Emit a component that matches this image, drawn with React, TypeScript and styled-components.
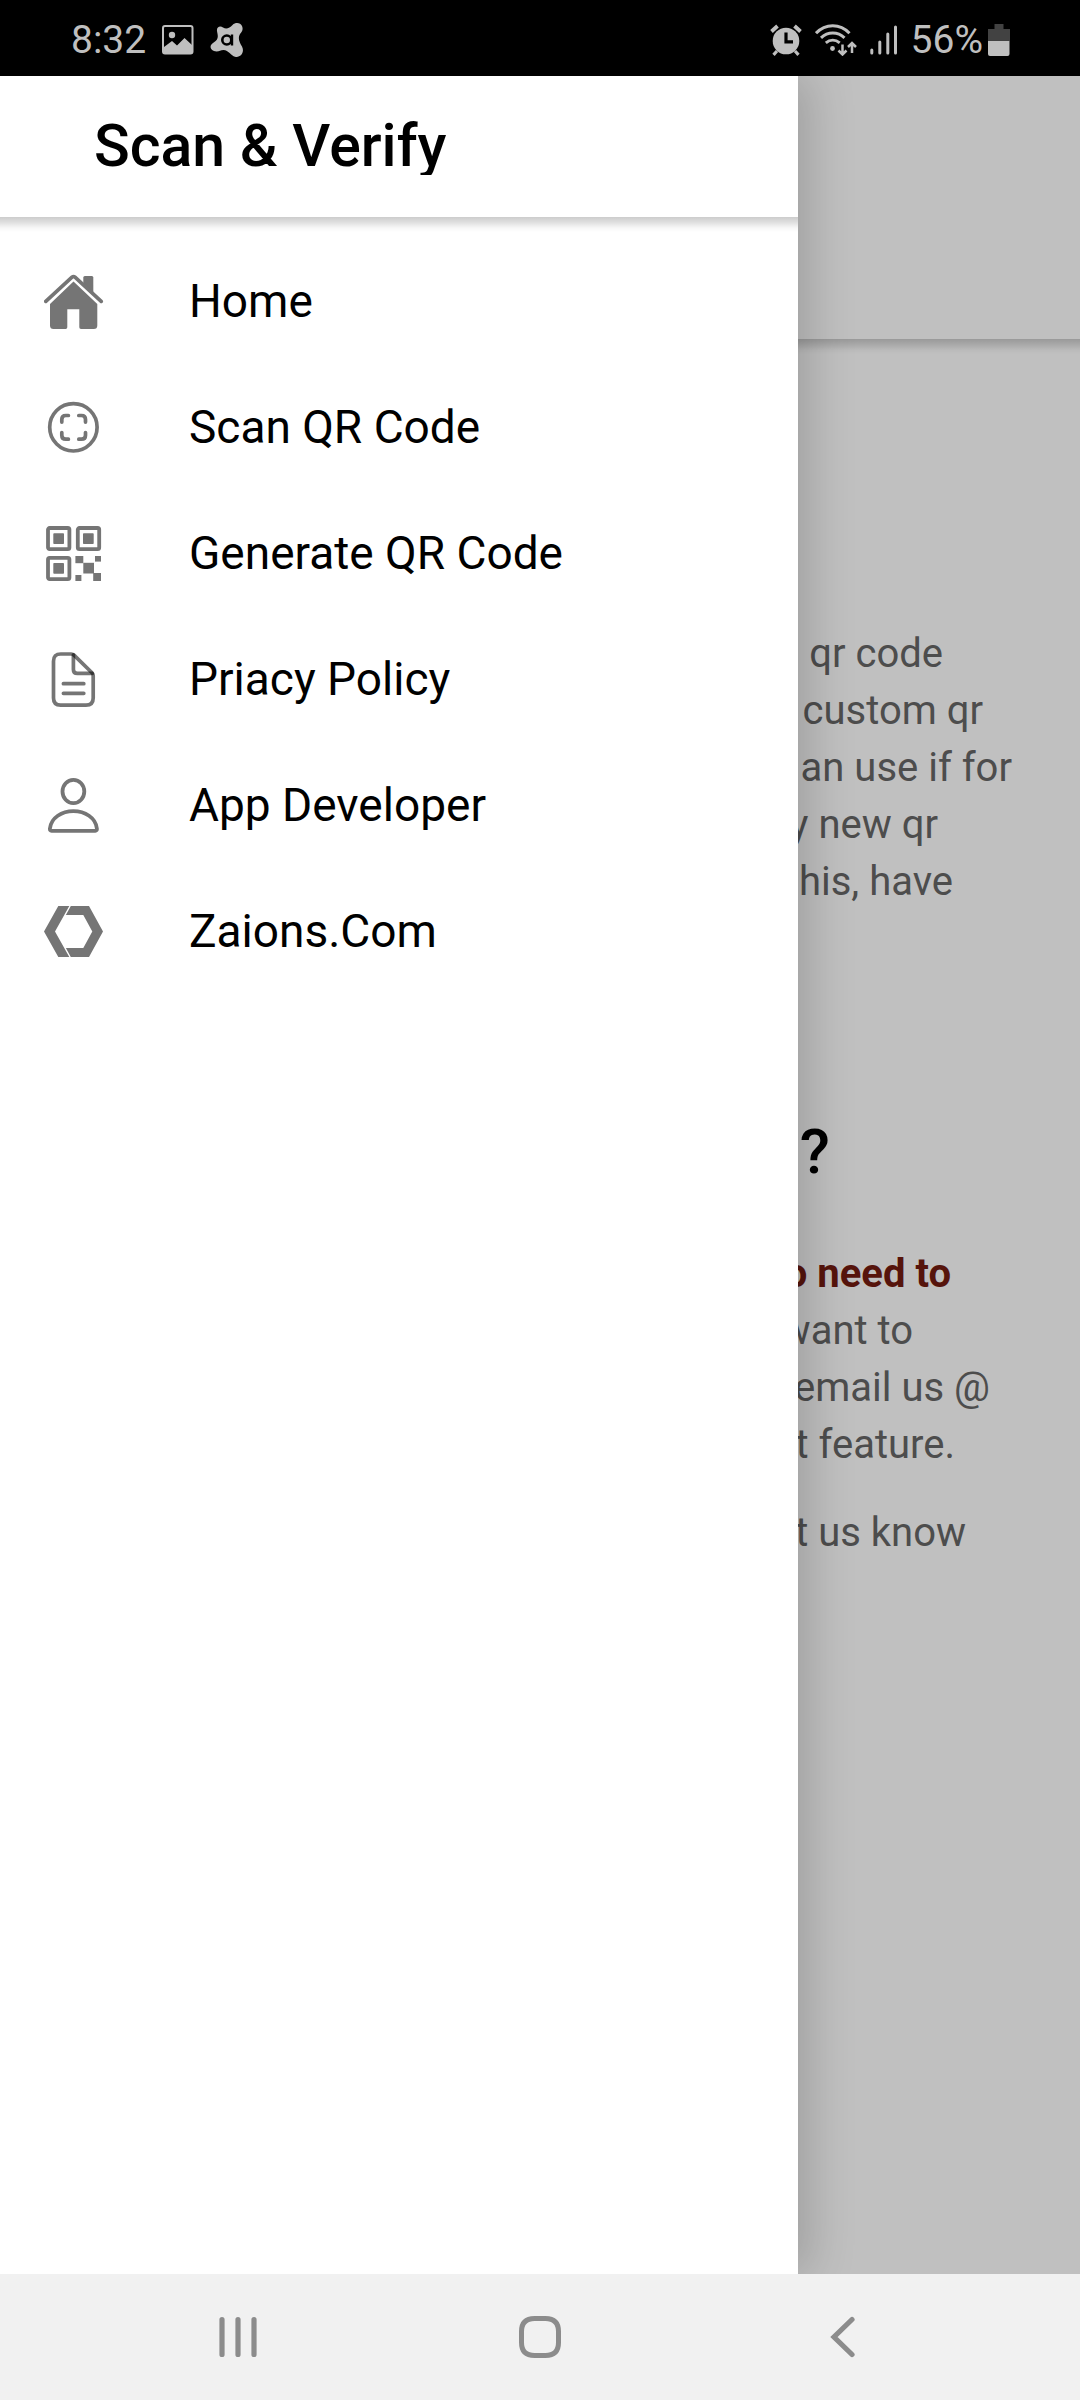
import React from "react";
import styled, { createGlobalStyle } from "styled-components";

const GlobalStyle = createGlobalStyle`
  *, *::before, *::after { box-sizing: border-box; }
  body { margin: 0; background: #fff; font-family: Roboto, "Noto Sans", sans-serif; }
  h1, h2, p, ul { margin: 0; padding: 0; font-weight: 400; }
  svg { display: block; flex: none; }
`;

const Phone = styled.div`
  display: flex;
  flex-direction: column;
  min-height: 100vh;
`;

const StatusBar = styled.header`
  display: flex;
  align-items: center;
  justify-content: space-between;
  height: 76px;
  padding: 4px 70px 0 71px;
  background: #000;
  color: #bfbfbf;
  font-size: 39px;
  line-height: 48px;
`;

const StatusGroup = styled.div<{ $gap: number }>`
  display: flex;
  align-items: center;
  gap: ${({ $gap }) => $gap}px;
`;

const Battery = styled.div`
  display: flex;
  align-items: center;
  gap: 5px;
`;

const Stage = styled.div`
  display: flex;
  flex: 1;
  overflow: hidden;
`;

const Drawer = styled.aside`
  position: relative;
  z-index: 1;
  flex: none;
  width: 798px;
  max-width: 74%;
  background: #fff;
  box-shadow: 11px 0 44px rgba(0, 0, 0, 0.18);
`;

const DrawerHeader = styled.div`
  display: flex;
  align-items: center;
  height: 141px;
  padding: 0 94px 2px;
`;

const DrawerTitle = styled.h1`
  overflow: hidden;
  font-size: 59px;
  font-weight: 500;
  line-height: 58px;
  color: #000;
  white-space: nowrap;
`;

const BarShadow = styled.div`
  height: 21px;
  background: linear-gradient(
    to bottom,
    rgba(0, 0, 0, 0.2) 0,
    rgba(0, 0, 0, 0.13) 5px,
    rgba(0, 0, 0, 0.03) 11px,
    rgba(0, 0, 0, 0) 15px
  );
`;

const Menu = styled.ul`
  list-style: none;
`;

const MenuLink = styled.a`
  display: flex;
  align-items: center;
  gap: 85px;
  height: 126px;
  padding: 0 44px;
  color: #000;
  font-size: 46px;
  line-height: 56px;
  text-decoration: none;
  white-space: nowrap;
`;

const Page = styled.main`
  flex: 1;
  min-width: 0;
  overflow: hidden;
  background: #c0c0c0;
`;

const PageBar = styled.div`
  height: 263px;
`;

const PageBody = styled.div`
  display: flex;
  flex-direction: column;
  padding-top: 265px;
`;

const Paragraph = styled.p<{ $space?: number }>`
  margin-top: ${({ $space = 0 }) => $space}px;
  color: #4d4d4d;
  font-size: 40px;
  line-height: 57px;
`;

const Line = styled.span<{ $end: number }>`
  display: flex;
  justify-content: flex-end;
  padding-right: ${({ $end }) => $end}px;
  white-space: nowrap;
`;

const Question = styled.h2`
  margin-top: 206px;
  font-size: 62px;
  font-weight: 500;
  line-height: 72px;
  color: #000;
`;

const Highlight = styled.strong`
  color: #56140c;
  font-weight: 700;
`;

const SystemNav = styled.nav`
  display: grid;
  grid-template-columns: repeat(3, 1fr);
  height: 126px;
  padding: 0 8%;
  background: #f1f1f1;
`;

const SystemButton = styled.button`
  display: flex;
  align-items: center;
  justify-content: center;
  padding: 0;
  border: 0;
  background: none;
  color: #8c8c8c;
`;

const ICON = "#757575";

const HomeIcon = () => (
  <svg width="60" height="60" viewBox="0 0 60 60" fill={ICON} aria-hidden="true">
    <path d="M39.3 14V6.5q0-1.5 1.5-1.5h7q1.5 0 1.5 1.5V23z" />
    <path d="M1.8 30.4L28 6.2q1.5-1.3 3 0l26.2 24.2" fill="none" stroke={ICON} strokeWidth="3.7" strokeLinecap="round" />
    <path d="M29.5 10.6L53.3 33v21.500q0 3.500-3.500 3.500H37q-1.700 0-1.700-1.700v-18H23.300v18q0 1.700-1.700 1.700H9.500Q6 58 6 54.500V33z" />
  </svg>
);

const ScanIcon = () => (
  <svg width="60" height="60" viewBox="0 0 60 60" fill="none" stroke={ICON} strokeWidth="3.7" strokeLinecap="round" aria-hidden="true">
    <circle cx="29.4" cy="30.3" r="23.7" />
    <path d="M24.4 18.5h-2.6q-4 0-4 4v2.6M34.8 18.5h2.7q4 0 4 4v2.6M24.4 42.2h-2.6q-4 0-4-4v-2.6M34.8 42.2h2.7q4 0 4-4v-2.6" />
  </svg>
);

const QrIcon = () => (
  <svg width="60" height="60" viewBox="0 0 60 60" fill={ICON} aria-hidden="true">
    <g fill="none" stroke={ICON} strokeWidth="3.8">
      <rect x="4" y="5" width="21.4" height="21.2" rx="1.6" />
      <rect x="33.8" y="5" width="21.4" height="21.2" rx="1.6" />
      <rect x="4" y="34.9" width="21.4" height="21.2" rx="1.6" />
    </g>
    <rect x="9.3" y="10.3" width="10.7" height="10.7" rx="0.8" />
    <rect x="39" y="10.3" width="10.7" height="10.7" rx="0.8" />
    <rect x="9.3" y="40" width="10.7" height="10.7" rx="0.8" />
    <rect x="39.3" y="39.8" width="10.7" height="10.7" />
    <rect x="31.4" y="33" width="7.9" height="7.2" />
    <rect x="51" y="33" width="6" height="5.6" />
    <rect x="31.4" y="52" width="6" height="6" />
    <rect x="49.2" y="50" width="7.8" height="8" />
  </svg>
);

const DocumentIcon = () => (
  <svg width="60" height="60" viewBox="0 0 60 60" fill="none" stroke="#000" strokeOpacity="0.54" strokeWidth="3.7" strokeLinecap="round" strokeLinejoin="round" aria-hidden="true">
    <path d="M49.2 26.5V49q0 7.2-7.2 7.2H16.7q-7.2 0-7.2-7.2V12.2Q9.5 5 16.7 5h10.6q1.6 0 2.7 1.1L48 23.7q1.2 1.2 1.2 2.8z" />
    <path d="M29.4 5.8v14.6q0 4 4 4h14.8" />
    <path d="M19.4 34.7h20.4M19.4 44.3h20.4" />
  </svg>
);

const PersonIcon = () => (
  <svg width="60" height="60" viewBox="0 0 60 60" fill="none" stroke={ICON} strokeWidth="3.8" strokeLinejoin="round" aria-hidden="true">
    <ellipse cx="29.4" cy="16.5" rx="10.9" ry="11.7" />
    <path d="M7.5 55.8q-1.8 0-1.6-2.2C7 42.6 18 36.2 29.4 36.2S51.8 42.6 52.9 53.6q.2 2.2-1.6 2.2z" />
  </svg>
);

const HexIcon = () => (
  <svg width="60" height="60" viewBox="0 0 60 60" fill={ICON} aria-hidden="true">
    <path d="M14.3 5H25.3L11 30.5 25.3 56h-11L0 30.5z" />
    <path d="M26.8 5H45l14 25.5L45 56H26.8l-4.9-8.9h17.4l9-16.6-9-16.5H21.900z" />
  </svg>
);

const PhotoIcon = () => (
  <svg width="32" height="30" viewBox="0 0 32 30" aria-hidden="true">
    <rect x="1" y="1" width="29.5" height="27.5" rx="2" fill="none" stroke="currentColor" strokeWidth="2" />
    <circle cx="10" cy="10" r="3.2" fill="currentColor" />
    <path d="M2 22l8-6 5 4.5L22.5 13 30 20v8H2z" fill="currentColor" />
  </svg>
);

const ShieldBlobIcon = () => (
  <svg width="34" height="34" viewBox="0 0 34 34" aria-hidden="true">
    <path
      d="M7 8c-.5-4 3-5.500 6-3.500 3.500 2 6.500.5 9.500-2.500 3-3 8-2.500 9.500 1 1.500 3.500 0 5.500-2 8-2.500 4-.5 8.500 2 12.500 3 6-1.500 11.500-7 10.200-4-.9-6.500-6.700-11.500-6.700-3 0-4 1.500-7 1.500C2 28.500-.5 25 1 22c1.500-2.500 4.500-3 6-5.500 1.500-3 .5-5 0-8.500z"
      fill="currentColor"
    />
    <circle cx="16.800" cy="17" r="4.500" fill="none" stroke="#000" strokeWidth="2.600" />
    <path d="M22 11.500v11" stroke="#000" strokeWidth="2.400" />
  </svg>
);

const AlarmIcon = () => (
  <svg width="32" height="32" viewBox="0 0 32 32" fill="none" stroke="currentColor" aria-hidden="true">
    <circle cx="16" cy="17" r="13.3" fill="currentColor" stroke="none" />
    <path d="M1.500 7.500l6-5.500M24.500 2l6 5.500" strokeWidth="3.8" />
    <path d="M7 27l-3.500 3.800M25 27l3.500 3.800" strokeWidth="3.2" />
    <path d="M16 8.500v9.300h7" stroke="#000" strokeWidth="3.2" />
  </svg>
);

const WifiIcon = () => (
  <svg width="42" height="32" viewBox="0 0 42 32" fill="none" stroke="currentColor" strokeWidth="3" aria-hidden="true">
    <path d="M1 9.2C10.500-.8 25-.8 34.500 9.200" />
    <path d="M6 13.800c6.800-6.300 16.700-6.300 23.500 0" />
    <path d="M10.800 18.800c4.200-3.400 9.700-3.400 13.900 0" />
    <circle cx="17.500" cy="24.500" r="2.4" fill="currentColor" stroke="none" />
    <path d="M27.500 20.500v10M23.500 26.500l4 4 4-4M37 29V19M33 23l4-4 4 4" strokeWidth="2.5" />
  </svg>
);

const SignalIcon = () => (
  <svg width="28" height="30" viewBox="0 0 28 30" stroke="currentColor" strokeWidth="3" strokeLinecap="round" aria-hidden="true">
    <path d="M1.800 25v3M9.800 17v11M17.800 9v19M25.500 2v26" />
  </svg>
);

const BatteryIcon = () => (
  <svg width="22" height="33" viewBox="0 0 22 33" aria-hidden="true">
    <path d="M6.500 0h9v5H22v12H0V5h6.500z" fill="#424242" />
    <path d="M0 17h21.500v13q0 2-2 2H2q-2 0-2-2z" fill="currentColor" />
  </svg>
);

const RecentsIcon = () => (
  <svg width="42" height="42" viewBox="0 0 42 42" stroke="currentColor" strokeWidth="5.2" strokeLinecap="round" aria-hidden="true">
    <path d="M5 3.500v35M21 3.500v35M37 3.500v35" />
  </svg>
);

const HomeKeyIcon = () => (
  <svg width="42" height="42" viewBox="0 0 42 42" fill="none" stroke="currentColor" strokeWidth="5" aria-hidden="true">
    <path d="M15.500 2.500h11C35.500 2.500 39.500 7 39.500 15.500v11c0 8.500-4 13-13 13h-11c-9 0-13-4.500-13-13v-11c0-8.500 4-13 13-13z" />
  </svg>
);

const BackIcon = () => (
  <svg width="42" height="42" viewBox="0 0 42 42" fill="none" stroke="currentColor" strokeWidth="5.2" strokeLinecap="round" strokeLinejoin="miter" aria-hidden="true">
    <path d="M31 3.500L13 21l18 17.500" />
  </svg>
);

const menuItems = [
  { label: "Home", Icon: HomeIcon },
  { label: "Scan QR Code", Icon: ScanIcon },
  { label: "Generate QR Code", Icon: QrIcon },
  { label: "Priacy Policy", Icon: DocumentIcon },
  { label: "App Developer", Icon: PersonIcon },
  { label: "Zaions.Com", Icon: HexIcon },
];

export default function App() {
  return (
    <Phone>
      <GlobalStyle />
      <StatusBar>
        <StatusGroup $gap={16}>
          <time>8:32</time>
          <PhotoIcon />
          <ShieldBlobIcon />
        </StatusGroup>
        <StatusGroup $gap={13}>
          <AlarmIcon />
          <WifiIcon />
          <SignalIcon />
          <Battery>
            <span>56%</span>
            <BatteryIcon />
          </Battery>
        </StatusGroup>
      </StatusBar>

      <Stage>
        <Drawer>
          <DrawerHeader>
            <DrawerTitle>Scan &amp; Verify</DrawerTitle>
          </DrawerHeader>
          <BarShadow />
          <Menu>
            {menuItems.map(({ label, Icon }) => (
              <li key={label}>
                <MenuLink href="#">
                  <Icon />
                  {label}
                </MenuLink>
              </li>
            ))}
          </Menu>
        </Drawer>

        <Page>
          <PageBar />
          <BarShadow />
          <PageBody>
            <Paragraph>
              <Line $end={137}>qr code</Line>
              <Line $end={97}>custom qr</Line>
              <Line $end={68}>an use if for</Line>
              <Line $end={142}>y new qr</Line>
              <Line $end={127}>his, have</Line>
            </Paragraph>
            <Question>
              <Line $end={250}>?</Line>
            </Question>
            <Paragraph $space={57}>
              <Line $end={129}>
                <Highlight>o need to</Highlight>
              </Line>
              <Line $end={167}>want to</Line>
              <Line $end={90}>email us @</Line>
              <Line $end={125}>t feature.</Line>
            </Paragraph>
            <Paragraph $space={31}>
              <Line $end={114}>t us know</Line>
            </Paragraph>
          </PageBody>
        </Page>
      </Stage>

      <SystemNav aria-label="System">
        <SystemButton type="button" aria-label="Recent apps">
          <RecentsIcon />
        </SystemButton>
        <SystemButton type="button" aria-label="Home screen">
          <HomeKeyIcon />
        </SystemButton>
        <SystemButton type="button" aria-label="Back">
          <BackIcon />
        </SystemButton>
      </SystemNav>
    </Phone>
  );
}
